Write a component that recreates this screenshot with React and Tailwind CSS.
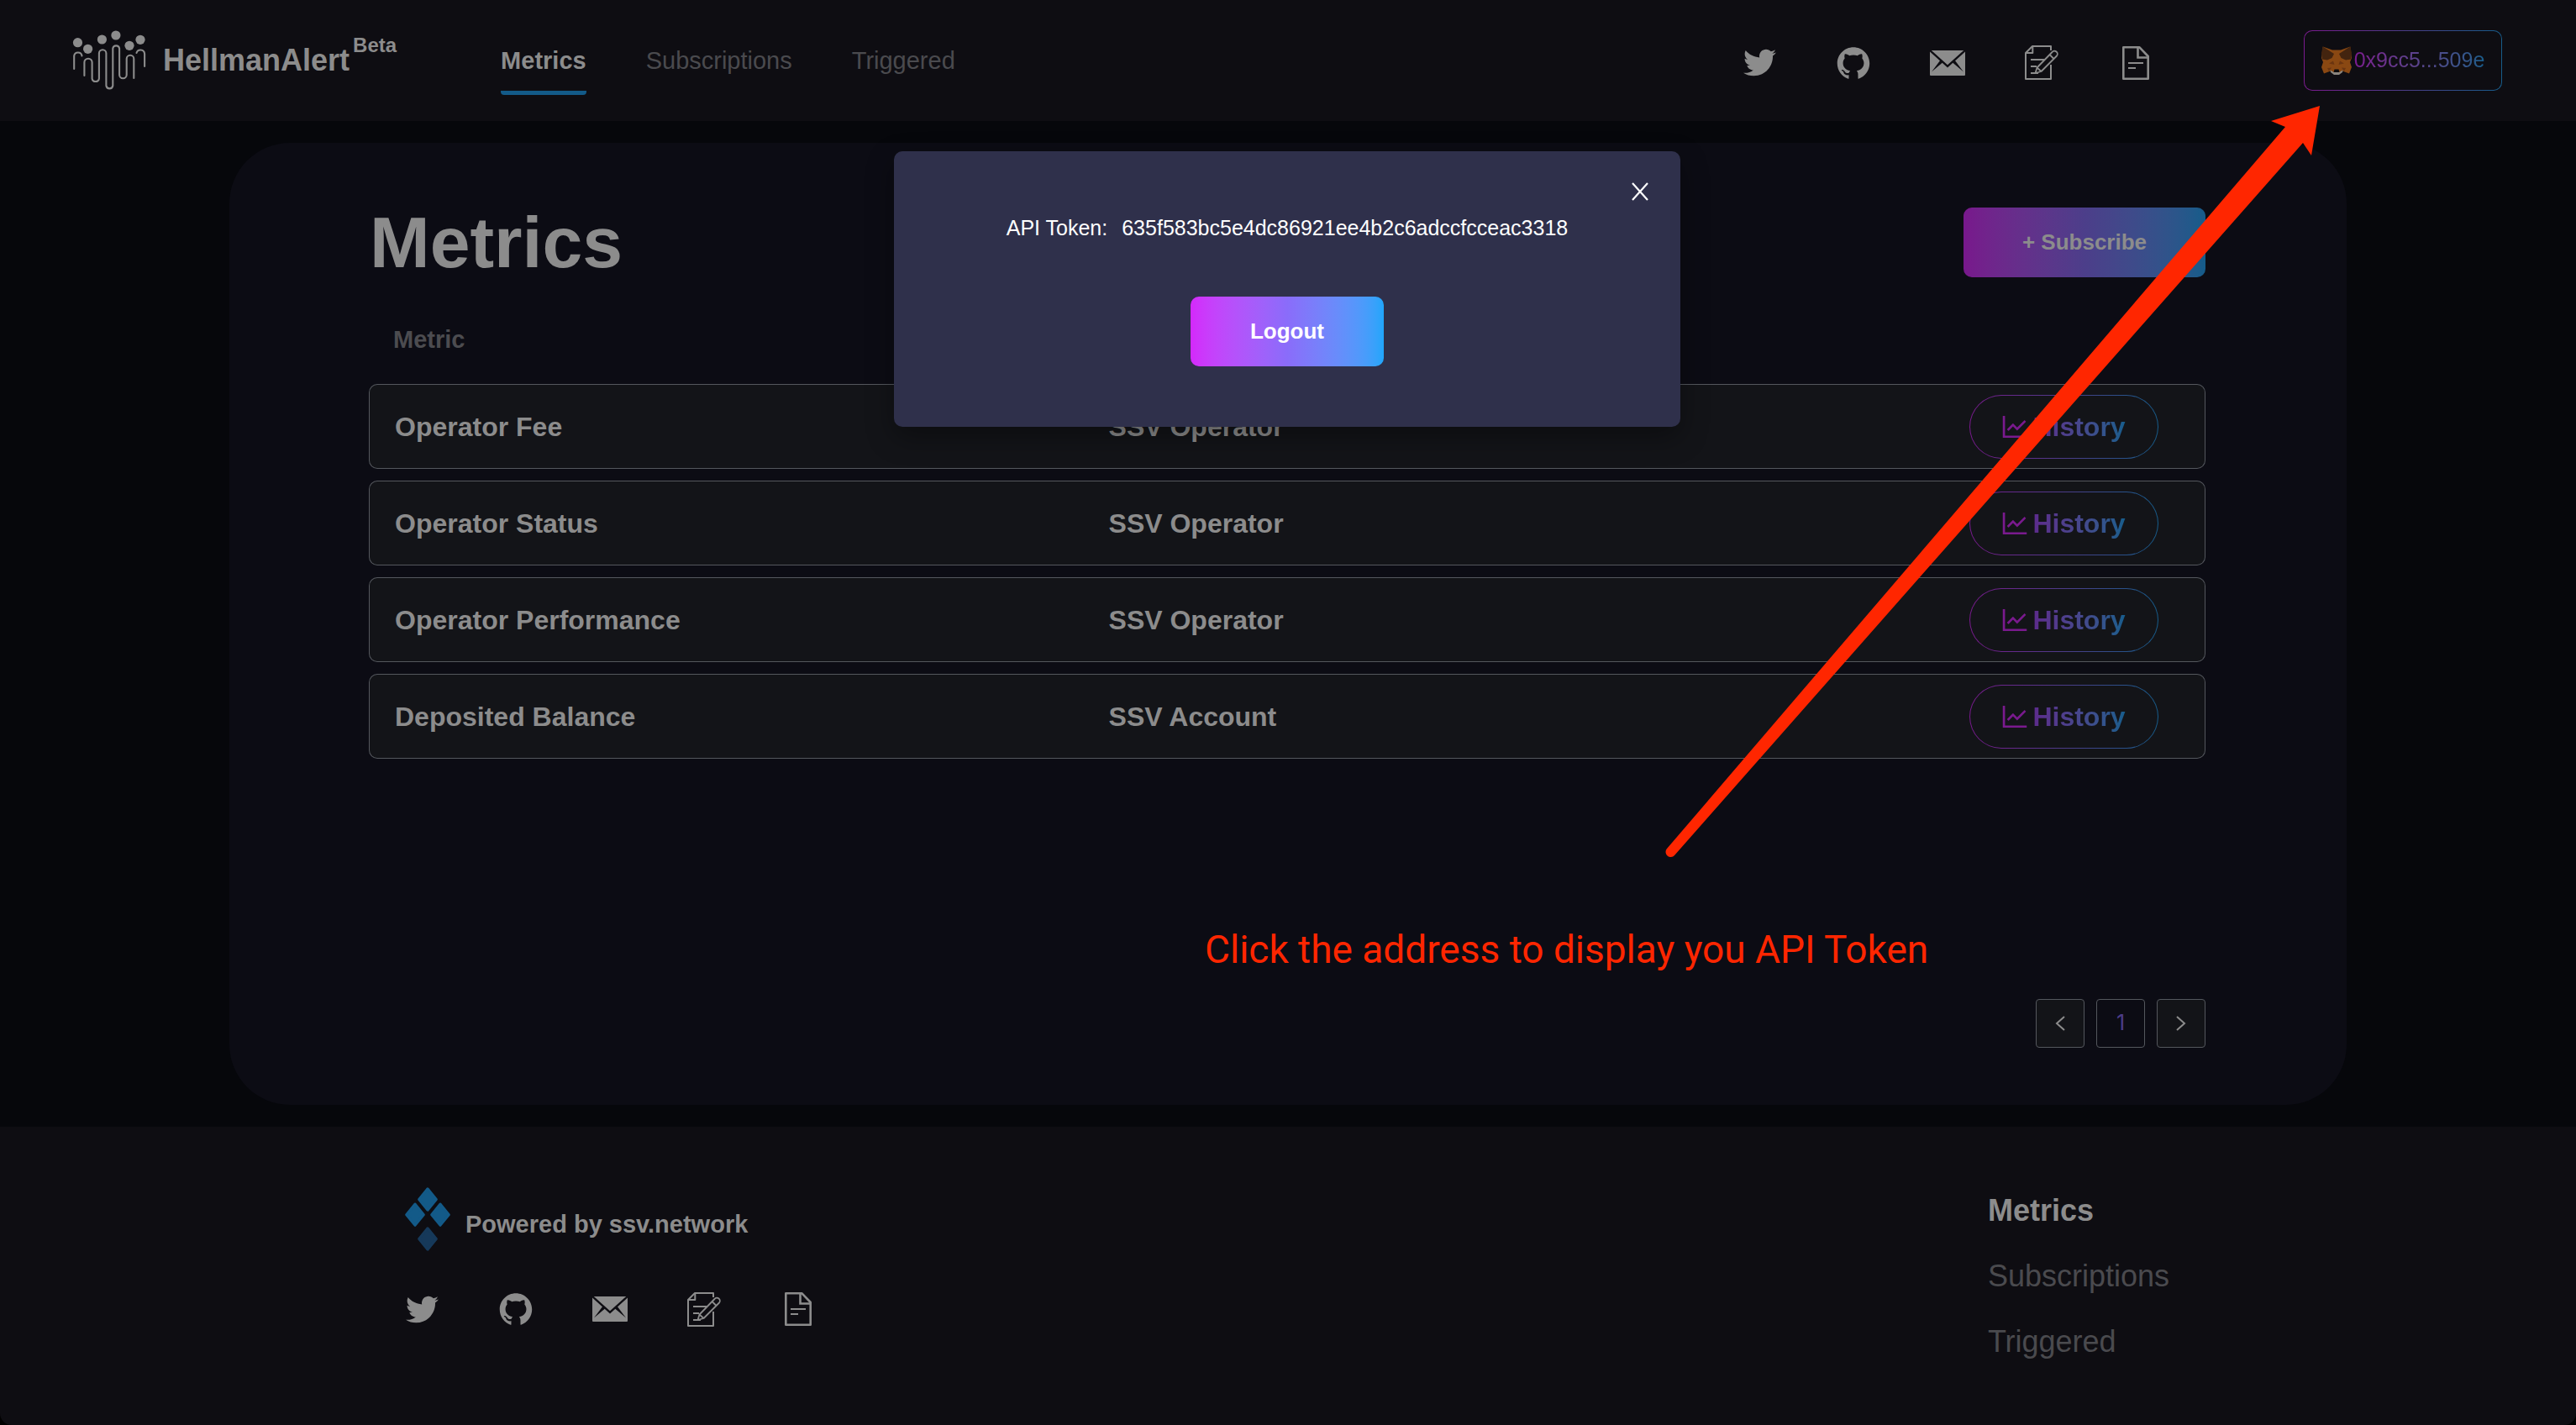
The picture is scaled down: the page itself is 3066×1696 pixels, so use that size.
import React from "react";
import { FaTwitter } from "react-icons/fa";
import { AiFillGithub, AiOutlineLineChart } from "react-icons/ai";

const links = ["Metrics", "Subscriptions", "Triggered"];

const metrics = [
  { name: "Operator Fee", target: "SSV Operator" },
  { name: "Operator Status", target: "SSV Operator" },
  { name: "Operator Performance", target: "SSV Operator" },
  { name: "Deposited Balance", target: "SSV Account" },
];

function BrandMark() {
  return (
    <svg viewBox="0 0 88 72" className="h-[72px] w-[88px]" aria-hidden="true">
      <g fill="#8c8c8c">
        <circle cx="6.5" cy="14.7" r="5.6" />
        <circle cx="18.6" cy="22.3" r="5.6" />
        <circle cx="35.4" cy="11" r="5.6" />
        <circle cx="51.9" cy="6" r="5.6" />
        <circle cx="68" cy="18.3" r="5.6" />
        <circle cx="81" cy="11.3" r="5.6" />
      </g>
      <g fill="none" stroke="#8c8c8c" strokeWidth="2.1" strokeLinecap="round">
        <path d="M2.2 46V30.5A4.7 4.7 0 0 1 11.5 30.5" />
        <path d="M14.4 54V38.3A4.6 4.6 0 0 1 23.6 38.3V57.5A4.2 4.2 0 0 0 31.9 57.5V27.5A4.2 4.2 0 0 1 40.4 27.5V66A4 4 0 0 0 48.3 66V21.5A4 4 0 0 1 56.1 21.5V53A4.3 4.3 0 0 0 64.7 53V34A4.3 4.3 0 0 1 73.3 34V57" />
        <path d="M86.1 43V28A4.9 4.9 0 0 0 76.5 27" />
      </g>
    </svg>
  );
}

function MailIcon() {
  return (
    <svg viewBox="0 0 42 30" className="w-[42px]" aria-hidden="true">
      <rect width="42" height="30" rx="1" fill="#8c8c8c" />
      <path d="M0 0L21 19L42 0" fill="none" stroke="#0e0d12" strokeWidth="2.4" />
      <path d="M12.5 11.5L15 14.5L2 25.5ZM29.5 11.5L27 14.5L40 25.5Z" fill="#0e0d12" />
    </svg>
  );
}

function EditIcon() {
  return (
    <svg viewBox="0 0 40 41" className="w-10" fill="none" stroke="#8c8c8c" strokeWidth="2" strokeLinejoin="round" aria-hidden="true">
      <path d="M31 6V1H9L1 9V40H31V23" />
      <path d="M9.3 1V9H1M7 17H23M7 25H14M7 33H16" />
      <path d="M32.5 8L14.5 26.5L12.5 33L19.5 31L38 12.5A3.5 3.5 0 0 0 32.5 8ZM29.5 11L34.5 16M14.5 26.5L19.5 31" strokeWidth="1.8" />
    </svg>
  );
}

function DocIcon() {
  return (
    <svg viewBox="0 0 32 40" className="w-8" fill="none" stroke="#8c8c8c" strokeWidth="2.6" aria-hidden="true">
      <path d="M1.3 1.3H20.5L30.7 12V38.7H1.3Z" strokeLinejoin="round" />
      <path d="M18.5 1V13.5H31" />
      <path d="M7 20H25M7 26H16" strokeWidth="2" />
    </svg>
  );
}

function SocialLinks() {
  const items = [
    ["Twitter", <FaTwitter size={39} />],
    ["GitHub", <AiFillGithub size={44} />],
    ["Email", <MailIcon />],
    ["Feedback", <EditIcon />],
    ["Docs", <DocIcon />],
  ];
  return (
    <div className="flex gap-[68px]">
      {items.map(([label, icon]) => (
        <a key={label} href="#" aria-label={label} className="flex size-11 items-center justify-center">
          {icon}
        </a>
      ))}
    </div>
  );
}

function Fox() {
  return (
    <svg viewBox="0 0 36 34" className="h-[34px] w-9" aria-hidden="true">
      <path d="M1.7 .5L13 4.5H23L34.3 .5L36 14L34 19L36 25L33 32.5L25 29.5L21 32H15L11 29.5L3 32.5L0 25L2 19L0 14Z" fill="#8a4812" />
      <path d="M1.7 .5L15 9L12.5 14L7 16.5L1 15.5L0 8ZM34.3 .5L21 9L23.5 14L29 16.5L35 15.5L36 8Z" fill="#43240f" />
      <path d="M9 20.5L14 17.5L15.5 22ZM27 20.5L22 17.5L20.5 22ZM7 26L12 25.5L9 30ZM29 26L24 25.5L27 30Z" fill="#6b3510" />
      <path d="M10.5 28.5L15 31H21L25.5 28.5L25 31L21 34H15L11 31Z" fill="#8a857e" />
      <path d="M15.5 27.5H20.5L21.5 31H14.5Z" fill="#0c0a0c" />
    </svg>
  );
}

function SsvMark() {
  return (
    <svg viewBox="0 0 54 76" className="h-[76px] w-[54px]" strokeWidth="3" strokeLinejoin="round" aria-hidden="true">
      <g fill="#135a88" stroke="#135a88">
        <path d="M27 1.8L37.3 14.5L27 27.2L16.7 14.5Z" />
        <path d="M12 20L22.3 32.7L12 45.4L1.7 32.7Z" />
        <path d="M42 20L52.3 32.7L42 45.4L31.7 32.7Z" />
      </g>
      <path d="M27 48.8L37.3 61.5L27 74.2L16.7 61.5Z" fill="#16395a" stroke="#16395a" />
    </svg>
  );
}

function Header() {
  return (
    <header className="flex items-start justify-between bg-[#0e0d12] pt-9 pr-[88px] pb-[31px] pl-[86px]">
      <div className="flex items-start">
        <a href="#" className="flex items-center gap-5 font-bold">
          <BrandMark />
          <span className="flex items-start text-4xl/[44px]">
            HellmanAlert
            <span className="-mt-3 ml-1 text-2xl/8">Beta</span>
          </span>
        </a>
        <nav className="ml-[124px] flex gap-[71px] text-[29px]/[72px]">
          {links.map((label, i) => (
            <a
              key={label}
              href="#"
              className={
                i === 0
                  ? "rounded-b border-b-[5px] border-[#135a88] font-bold"
                  : "text-[#4a4a4e]"
              }
            >
              {label}
            </a>
          ))}
        </nav>
      </div>
      <div className="flex items-start gap-[178px]">
        <div className="flex h-[77px] items-center">
          <SocialLinks />
        </div>
        <button className="flex h-[72px] w-[236px] items-center justify-center gap-[3px] rounded-[10px] border border-transparent text-[25px] [background:linear-gradient(#0e0d12,#0e0d12)_padding-box,linear-gradient(90deg,#7a1a8e,#4c3c88,#175c8a)_border-box]">
          <Fox />
          <span className="bg-linear-to-r from-[#7a1a8e] to-[#175c8a] bg-clip-text text-transparent">
            0x9cc5...509e
          </span>
        </button>
      </div>
    </header>
  );
}

function HistoryButton() {
  return (
    <button className="inline-flex h-[76px] w-[225px] items-center justify-center gap-[2px] rounded-full border border-transparent pr-1 align-middle text-[32px] font-bold [background:linear-gradient(#131418,#131418)_padding-box,linear-gradient(90deg,#7a1a8e,#4c3c88,#175c8a)_border-box]">
      <AiOutlineLineChart size={38} color="#7a1a8e" />
      <span className="bg-linear-to-r from-[#5c2a8c] to-[#145d8c] bg-clip-text text-transparent">
        History
      </span>
    </button>
  );
}

function Chevron({ d }) {
  return (
    <svg viewBox="0 0 14 18" className="h-[18px] w-[14px]" fill="none" stroke="#8c8c8c" strokeWidth="2" aria-hidden="true">
      <path d={d} />
    </svg>
  );
}

function MetricsCard() {
  const cell = "h-[101px] border-y border-[#54575d] bg-[#131418]";
  const page = "flex size-[58px] items-center justify-center rounded border border-[#54575d]";
  return (
    <section className="rounded-[72px] bg-[#0c0c14] pt-[77px] pr-[168px] pb-[68px] pl-[166px]">
      <div className="flex items-center justify-between">
        <h1 className="pl-px text-[86px]/[83px] font-bold">Metrics</h1>
        <button className="h-[83px] w-[288px] rounded-[10px] bg-linear-to-r from-[#78188c] via-[#4c3e8a] to-[#145c8a] text-[26px] font-bold">
          + Subscribe
        </button>
      </div>
      <table className="mt-[23px] w-full table-fixed border-separate border-spacing-x-0 border-spacing-y-[14px] text-left">
        <thead>
          <tr>
            <th className="h-[76px] w-[39%] pl-[29px] text-[29px] text-[#4c4c50]">Metric</th>
            <td className="w-[35%]" />
            <td />
          </tr>
        </thead>
        <tbody className="text-[32px] font-bold">
          {metrics.map(({ name, target }) => (
            <tr key={name}>
              <td className={cell + " rounded-l-[10px] border-l pl-[30px]"}>{name}</td>
              <td className={cell + " pl-7"}>{target}</td>
              <td className={cell + " rounded-r-[10px] border-r pr-[55px] text-right"}>
                <HistoryButton />
              </td>
            </tr>
          ))}
        </tbody>
      </table>
      <nav aria-label="Pagination" className="mt-[272px] flex justify-end gap-[14px] font-[Inter,sans-serif] text-[25px]">
        <button aria-label="Previous page" className={page + " bg-[#131418]"}>
          <Chevron d="M12 1L3 9L12 17" />
        </button>
        <button className={page + " text-[#4c3c88]"}>1</button>
        <button aria-label="Next page" className={page + " bg-[#131418]"}>
          <Chevron d="M2 1L11 9L2 17" />
        </button>
      </nav>
    </section>
  );
}

function Footer() {
  return (
    <footer className="flex justify-between rounded-b-[14px] bg-[#0e0d12] pt-[61px] pr-[484px] pb-[60px] pl-[482px]">
      <div className="flex flex-col gap-[47px] pt-[11px]">
        <div className="flex items-center gap-[18px]">
          <SsvMark />
          <p className="pt-[14px] text-[29px] font-bold">Powered by ssv.network</p>
        </div>
        <div className="-ml-[2px]">
          <SocialLinks />
        </div>
      </div>
      <nav className="flex flex-col text-4xl/[78px]">
        {links.map((label, i) => (
          <a key={label} href="#" className={i === 0 ? "font-bold" : "text-[#4a4a4e]"}>
            {label}
          </a>
        ))}
      </nav>
    </footer>
  );
}

function TokenDialog() {
  return (
    <div className="absolute inset-x-0 top-[180px] flex justify-center pr-[2px]">
      <div
        role="dialog"
        aria-label="API Token"
        className="relative flex w-[936px] flex-col items-center rounded-[10px] bg-[#2f304b] pt-[73px] pb-[72px] text-white shadow-[0_12px_32px_rgba(0,0,0,0.35)]"
      >
        <button aria-label="Close" className="absolute top-9 right-[37px] p-px">
          <svg viewBox="0 0 20 22" className="h-[22px] w-5" stroke="white" strokeWidth="2.2" aria-hidden="true">
            <path d="M1 1L19 21M19 1L1 21" />
          </svg>
        </button>
        <p className="flex gap-[17px] text-[25px]/9">
          <span>API Token:</span>
          <span>635f583bc5e4dc86921ee4b2c6adccfcceac3318</span>
        </p>
        <button className="mt-16 h-[83px] w-[230px] rounded-[10px] bg-linear-to-r from-[#d428fb] via-[#8a6cfa] to-[#1fa6fb] text-[26px] font-bold">
          Logout
        </button>
      </div>
    </div>
  );
}

function Annotation() {
  return (
    <div className="pointer-events-none absolute inset-0 overflow-hidden">
      <svg viewBox="0 0 786 900" className="absolute top-[122px] left-[1980px] w-[786px]" aria-hidden="true">
        <path d="M781 4L723 22L740 29L4 888A6 6 0 0 0 13 896L761 48L771 63Z" fill="#ff2600" />
      </svg>
      <p className="absolute top-[1099px] left-[1434px] font-[Roboto,sans-serif] text-[46px]/[62px] whitespace-nowrap text-[#ff2600]">
        Click the address to display you API Token
      </p>
    </div>
  );
}

export default function App() {
  return (
    <div className="relative min-h-screen bg-black font-['Liberation_Sans',Arial,sans-serif] text-[#8c8c8c]">
      <Header />
      <main className="bg-[#06070b] px-[273px] py-[26px]">
        <MetricsCard />
      </main>
      <Footer />
      <TokenDialog />
      <Annotation />
    </div>
  );
}
